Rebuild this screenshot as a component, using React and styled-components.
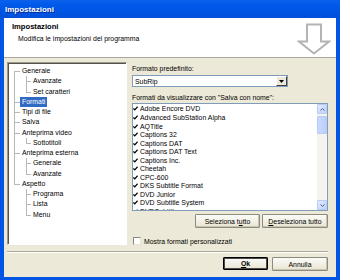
import React from "react";
import styled, { createGlobalStyle } from "styled-components";

const TREE = [
  { label: "Generale", lvl: 0 },
  { label: "Avanzate", lvl: 1 },
  { label: "Set caratteri", lvl: 1, last: true },
  { label: "Formati", lvl: 0, selected: true },
  { label: "Tipi di file", lvl: 0 },
  { label: "Salva", lvl: 0 },
  { label: "Anteprima video", lvl: 0 },
  { label: "Sottotitoli", lvl: 1, last: true },
  { label: "Anteprima esterna", lvl: 0 },
  { label: "Generale", lvl: 1 },
  { label: "Avanzate", lvl: 1, last: true },
  { label: "Aspetto", lvl: 0, lastRoot: true },
  { label: "Programa", lvl: 1 },
  { label: "Lista", lvl: 1 },
  { label: "Menu", lvl: 1, last: true }
];

const FORMATS = [
  "Adobe Encore DVD",
  "Advanced SubStation Alpha",
  "AQTitle",
  "Captions 32",
  "Captions DAT",
  "Captions DAT Text",
  "Captions Inc.",
  "Cheetah",
  "CPC-600",
  "DKS Subtitle Format",
  "DVD Junior",
  "DVD Subtitle System",
  "DVDSubtitle"
];

export default function App() {
  let pastLastRoot = false;
  return (
    <>
      <Global />
      <Window>
        <TitleBar>Impostazioni</TitleBar>
        <Client>
          <Header>
            <HeaderText>
              <HeaderTitle>Impostazioni</HeaderTitle>
              <HeaderSub>Modifica le impostazioni del programma</HeaderSub>
            </HeaderText>
            <BigArrow />
          </Header>
          <Body>
            <Main>
              <TreeBox>
                {TREE.map((item, i) => {
                  if (item.lastRoot) pastLastRoot = true;
                  if (item.lvl === 0) {
                    const v = i === 0 ? "bottom" : item.lastRoot ? "top" : "full";
                    return (
                      <TreeRow key={i}>
                        <Guide $x={5} $v={v} $h />
                        <TreeLabel $selected={item.selected}>{item.label}</TreeLabel>
                      </TreeRow>
                    );
                  }
                  return (
                    <TreeRow key={i}>
                      <Guide $x={5} $v={pastLastRoot ? "none" : "full"} />
                      <Guide $x={6} $v={item.last ? "top" : "full"} $h />
                      <TreeLabel>{item.label}</TreeLabel>
                    </TreeRow>
                  );
                })}
              </TreeBox>
              <Panel>
                <Label $top={3}>Formato predefinito:</Label>
                <Combo>
                  <ComboText>SubRip</ComboText>
                  <DropButton>
                    <svg width="5" height="3" viewBox="0 0 5 3">
                      <path d="M0 0h5L2.5 3z" fill="#000" />
                    </svg>
                  </DropButton>
                </Combo>
                <Label $top={7}>Formati da visualizzare con "Salva con nome":</Label>
                <ListBox>
                  <Items>
                    {FORMATS.map(f => (
                      <Item key={f}>
                        <Check />
                        {f}
                      </Item>
                    ))}
                  </Items>
                  <ScrollBar>
                    <ScrollBtn>
                      <svg width="5" height="3" viewBox="0 0 5 3">
                        <path d="M0.5 2.5L2.5 0.6L4.5 2.5" stroke="#4d6185" fill="none" strokeWidth="1" />
                      </svg>
                    </ScrollBtn>
                    <Thumb />
                    <ScrollBtn $bottom>
                      <svg width="5" height="3" viewBox="0 0 5 3">
                        <path d="M0.5 0.5L2.5 2.4L4.5 0.5" stroke="#4d6185" fill="none" strokeWidth="1" />
                      </svg>
                    </ScrollBtn>
                  </ScrollBar>
                </ListBox>
                <ButtonRow>
                  <Button $w={65}>
                    Seleziona t<u>u</u>tto
                  </Button>
                  <Button $w={66}>
                    <u>D</u>eseleziona tutto
                  </Button>
                </ButtonRow>
                <CheckRow>
                  <CheckBox />
                  Mostra formati personalizzati
                </CheckRow>
              </Panel>
            </Main>
            <Separator />
            <Footer>
              <Button $w={45} $default>
                <u>O</u>k
              </Button>
              <Button $w={56}>Annulla</Button>
            </Footer>
          </Body>
        </Client>
      </Window>
    </>
  );
}

function BigArrow() {
  return (
    <ArrowSvg width="34" height="32" viewBox="0 0 34 32">
      <path
        d="M10 1.5h14v17h8L17 30.5L2 18.5h8z"
        fill="#fff"
        stroke="#b4b4b4"
        strokeWidth="2"
        strokeLinejoin="miter"
      />
    </ArrowSvg>
  );
}

function Check() {
  return (
    <CheckSvg width="5" height="5" viewBox="0 0 5 5">
      <path d="M0.4 2.4L1.8 3.9L4.6 0.8" stroke="#000" strokeWidth="1.3" fill="none" />
    </CheckSvg>
  );
}

const Global = createGlobalStyle`
  html, body { margin: 0; padding: 0; background: #fff; }
`;

const Window = styled.div`
  width: 340px;
  height: 280px;
  display: flex;
  flex-direction: column;
  background: #0055e5;
  overflow: hidden;
  font-family: "Liberation Sans", Arial, sans-serif;
  font-size: 6.9px;
  color: #000;
`;

const TitleBar = styled.div`
  flex: none;
  height: 18px;
  display: flex;
  align-items: center;
  padding-left: 5px;
  background: linear-gradient(to bottom, #0b61ee 0%, #0059ea 25%, #0054e3 70%, #004fd9 100%);
  color: #fff;
  font-weight: bold;
  font-size: 8px;
  text-shadow: 1px 1px 0 #0a2a8a;
`;

const Client = styled.div`
  flex: 1;
  margin: 0 4px 3px 4px;
  display: flex;
  flex-direction: column;
  background: #ece9d8;
`;

const Header = styled.div`
  flex: none;
  height: 40px;
  box-sizing: border-box;
  background: #fff;
  border-bottom: 1px solid #aca899;
  display: flex;
  justify-content: space-between;
  padding: 0 5px 0 8px;
`;

const HeaderText = styled.div`
  display: flex;
  flex-direction: column;
  padding-top: 5px;
`;

const HeaderTitle = styled.div`
  font-weight: bold;
  font-size: 7.6px;
  line-height: 8px;
`;

const HeaderSub = styled.div`
  margin-top: 4px;
  padding-left: 6px;
  line-height: 8px;
`;

const ArrowSvg = styled.svg`
  margin-top: 5px;
`;

const Body = styled.div`
  flex: 1;
  display: flex;
  flex-direction: column;
  padding: 4px 8px 0 3px;
`;

const Main = styled.div`
  display: flex;
  gap: 5px;
  height: 183px;
`;

const TreeBox = styled.div`
  width: 120px;
  box-sizing: border-box;
  background: #fff;
  border: 1px solid;
  border-color: #9d9a8c #fff #fff #9d9a8c;
  box-shadow: inset 1px 1px 0 #55534c;
  padding: 3px 0 0 1px;
  overflow: hidden;
`;

const TreeRow = styled.div`
  display: flex;
  height: 10.25px;
  align-items: stretch;
`;

const Guide = styled.span`
  position: relative;
  flex: none;
  width: 11px;
  &::before {
    content: "";
    display: ${p => (p.$v === "none" ? "none" : "block")};
    position: absolute;
    left: ${p => p.$x}px;
    top: ${p => (p.$v === "bottom" ? "50%" : "0")};
    bottom: ${p => (p.$v === "top" ? "50%" : "0")};
    border-left: 1px solid #b7b7b7;
  }
  &::after {
    content: "";
    display: ${p => (p.$h ? "block" : "none")};
    position: absolute;
    left: ${p => p.$x}px;
    right: 0;
    top: 50%;
    border-top: 1px solid #b7b7b7;
  }
`;

const TreeLabel = styled.span`
  padding: 0 2px;
  line-height: 10.25px;
  white-space: nowrap;
  background: ${p => (p.$selected ? "#316ac5" : "transparent")};
  color: ${p => (p.$selected ? "#fff" : "#000")};
`;

const Panel = styled.div`
  width: 196px;
  display: flex;
  flex-direction: column;
`;

const Label = styled.div`
  margin-top: ${p => p.$top}px;
  height: 8px;
  line-height: 8px;
  white-space: nowrap;
`;

const Combo = styled.div`
  margin-top: 2px;
  width: 156px;
  height: 12px;
  box-sizing: border-box;
  border: 1px solid #7f9db9;
  background: #fff;
  display: flex;
  align-items: center;
  justify-content: space-between;
`;

const ComboText = styled.span`
  padding-left: 2px;
`;

const DropButton = styled.div`
  width: 11px;
  height: 10px;
  box-sizing: border-box;
  background: #ece9d8;
  border: 1px solid;
  border-color: #fff #404040 #404040 #fff;
  display: flex;
  align-items: center;
  justify-content: center;
`;

const ListBox = styled.div`
  margin-top: 1px;
  height: 108px;
  box-sizing: border-box;
  border: 1px solid #7f9db9;
  background: #fff;
  display: flex;
`;

const Items = styled.div`
  flex: 1;
  overflow: hidden;
  padding-top: 0.7px;
`;

const Item = styled.div`
  height: 8.55px;
  display: flex;
  align-items: center;
  white-space: nowrap;
`;

const CheckSvg = styled.svg`
  flex: none;
  margin: 0 2px 0 0;
`;

const ScrollBar = styled.div`
  width: 10px;
  flex: none;
  display: flex;
  flex-direction: column;
  background: #f4f3ee;
`;

const ScrollBtn = styled.div`
  height: 10px;
  box-sizing: border-box;
  border: 1px solid #b7cbf5;
  border-radius: 1px;
  background: linear-gradient(to bottom right, #e1eafe, #c0d1fb);
  display: flex;
  align-items: center;
  justify-content: center;
  margin-top: ${p => (p.$bottom ? "auto" : "0")};
`;

const Thumb = styled.div`
  margin-top: 2px;
  height: 18px;
  box-sizing: border-box;
  border: 1px solid #b7cbf5;
  border-radius: 1px;
  background: linear-gradient(to right, #c9d8fc, #bccffb);
`;

const ButtonRow = styled.div`
  margin-top: 3px;
  display: flex;
  justify-content: flex-end;
  gap: 2px;
`;

const Button = styled.div`
  width: ${p => p.$w}px;
  height: ${p => (p.$default ? 13 : 14)}px;
  box-sizing: border-box;
  display: flex;
  align-items: center;
  justify-content: center;
  white-space: nowrap;
  background: linear-gradient(to bottom, #fbfbf8, #ece9d8 85%, #d8d4c3);
  border: ${p => (p.$default ? "1px solid #000" : "1px solid #8d8b80")};
  box-shadow: ${p => (p.$default ? "inset 0 0 0 1px #4a4a4a" : "inset -1px -1px 0 #c9c5b3")};
  border-radius: 1px;
  font-weight: ${p => (p.$default ? "bold" : "normal")};
  u {
    text-decoration-thickness: 0.5px;
  }
`;

const CheckRow = styled.div`
  margin-top: 9px;
  height: 8px;
  display: flex;
  align-items: center;
  white-space: nowrap;
`;

const CheckBox = styled.div`
  width: 8px;
  height: 8px;
  box-sizing: border-box;
  margin: 0 3px 0 1px;
  background: #fff;
  border: 1px solid;
  border-color: #8a887c #e6e4da #e6e4da #8a887c;
`;

const Separator = styled.div`
  margin-top: 6px;
  height: 0;
  border-top: 1px solid #aca899;
  border-bottom: 1px solid #fff;
`;

const Footer = styled.div`
  margin-top: 4px;
  display: flex;
  justify-content: flex-end;
  gap: 4px;
`;
